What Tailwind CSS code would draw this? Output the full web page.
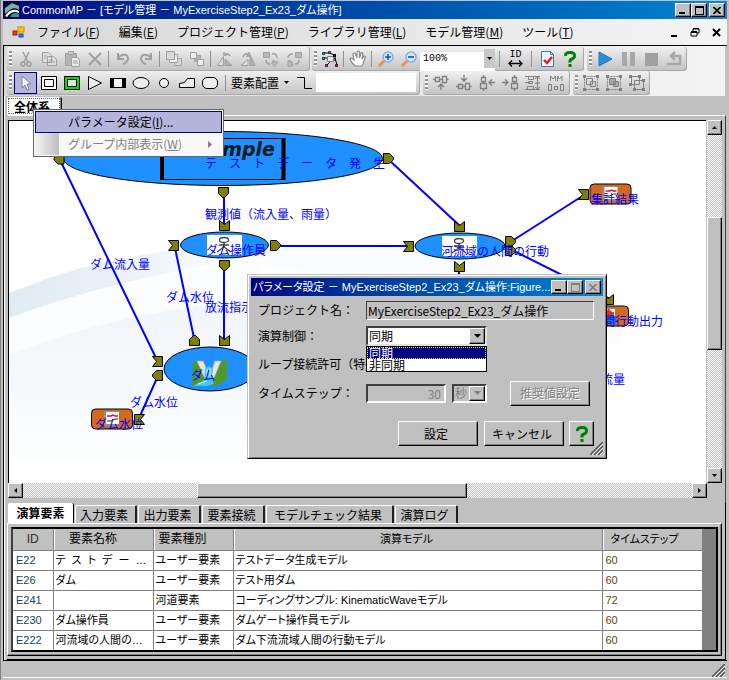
<!DOCTYPE html>
<html lang="ja">
	<head>
		<meta charset="UTF-8" />
		<meta name="viewport" content="width=device-width, initial-scale=1.0" />
		<title>CommonMP - モデル管理</title>
		<script src="https://cdn.jsdelivr.net/npm/@tailwindcss/browser@4"></script>
	</head>
	<body class="bg-[#c0c0c0] text-black text-[12px] leading-[14px] font-['Noto_Sans_CJK_JP',sans-serif]">
		<div class="relative min-h-screen flex flex-col pt-px px-[2px] pb-[2px] overflow-hidden border-l border-[#808080]">
			<!-- Title bar -->
			<header class="h-[18px] shrink-0 flex items-center gap-[2px] pl-px pr-[2px] bg-linear-to-r from-[#000080] to-[#1084d0] text-white">
				<svg class="size-4 shrink-0" viewBox="0 0 16 16">
					<rect width="16" height="16" fill="#0a0a14" />
					<path d="M1 6 L8 1 L15 4 L15 8 Q10 3 1 12Z" fill="#7fa9b8" />
					<path d="M1 14 Q7 5 15 9 L15 11 Q8 8 3 15Z" fill="#fff" />
					<path d="M6 15 Q9 9 15 12 L15 15Z" fill="#3b8fae" />
				</svg>
				<h1 class="grow truncate text-[11px] font-['Liberation_Sans','Noto_Sans_CJK_JP',sans-serif] [font-feature-settings:'palt']">CommonMP － [モデル管理 － MyExerciseStep2_Ex23_ダム操作]</h1>
				<div class="flex">
					<button aria-label="最小化" class="w-4 h-[14px] flex items-end pl-[3px] pb-[2px] bg-[#c0c0c0] border border-t-white border-l-white border-r-black border-b-black shadow-[inset_-1px_-1px_0_#808080]"><span class="w-[6px] h-[2px] bg-black"></span></button>
					<button aria-label="最大化" class="w-4 h-[14px] flex items-center justify-center bg-[#c0c0c0] border border-t-white border-l-white border-r-black border-b-black shadow-[inset_-1px_-1px_0_#808080]"><span class="w-[9px] h-[9px] border border-t-2 border-black"></span></button>
					<button aria-label="閉じる" class="ml-[2px] w-4 h-[14px] flex items-center justify-center bg-[#c0c0c0] border border-t-white border-l-white border-r-black border-b-black shadow-[inset_-1px_-1px_0_#808080]"><svg class="w-2 h-[7px]" viewBox="0 0 8 7"><path d="M.5 0 L7.5 7 M7.5 0 L.5 7" stroke="#000" stroke-width="1.6" /></svg></button>
				</div>
			</header>

			<!-- Menu bar -->
			<nav class="h-[26px] shrink-0 flex items-center pl-[9px] pr-[6px] bg-linear-to-r from-[#d8d8d8] to-[#f4f4f4]">
				<svg class="w-[13px] h-3 mr-3 shrink-0" viewBox="0 0 13 12">
					<rect x="1" y="5" width="4" height="4" fill="#f03c14" stroke="#a02000" />
					<rect x="6" y="1" width="6" height="5" fill="#ffc800" stroke="#c89000" />
					<rect x="7" y="8" width="4" height="3" fill="#3c78f0" stroke="#1c48a0" />
				</svg>
				<div class="flex gap-[19px] grow">
					<button>ファイル(<u>F</u>)</button>
					<button>編集(<u>E</u>)</button>
					<button>プロジェクト管理(<u>P</u>)</button>
					<button>ライブラリ管理(<u>L</u>)</button>
					<button>モデル管理(<u>M</u>)</button>
					<button>ツール(<u>T</u>)</button>
				</div>
				<div class="flex gap-[12px] items-center">
					<button aria-label="子ウィンドウを最小化"><svg class="w-[8px] h-[9px]" viewBox="0 0 8 9"><path d="M1 8h6" stroke="#000" stroke-width="2" /></svg></button>
					<button aria-label="子ウィンドウを元に戻す"><svg class="w-[10px] h-[9px]" viewBox="0 0 10 9" fill="none" stroke="#000"><path d="M3 3V1h6v4H7M3 .5h6M1 4h6v4H1z" /><path d="M1 4h6" stroke-width="2" /></svg></button>
					<button aria-label="子ウィンドウを閉じる"><svg class="w-[9px] h-[9px]" viewBox="0 0 9 9"><path d="M1 1l7 7M8 1L1 8" stroke="#000" stroke-width="2" /></svg></button>
				</div>
			</nav>

			<main class="grow flex flex-col border-l border-t border-black shadow-[inset_1px_0_0_#fff]">
				<!-- Tool bars -->
				<div class="shrink-0 pl-[3px] pt-px pb-px mr-[2px] bg-linear-to-r from-[#d8d8d8] to-[#f4f4f4]">
					<div class="flex h-6 gap-[2px]">
						<div class="flex items-center rounded-[3px] pr-1 bg-linear-to-b from-[#f0f0f0] to-[#c4c4c4] border-r border-b border-[#a8a8a8]">
							<span class="w-[3px] h-[15px] ml-[2px] mr-[2px] bg-[repeating-linear-gradient(#909090_0_2px,#f8f8f8_2px_4px)]"></span>
							<button aria-label="切り取り" class="w-[23px] flex justify-center"><svg class="size-[18px]" viewBox="0 0 18 18" fill="none" stroke="#a0a0a0" stroke-width="1.5"><path d="M6 2l5 10M12 2L7 12" /><circle cx="6" cy="14" r="2" /><circle cx="12" cy="14" r="2" /></svg></button>
							<button aria-label="コピー" class="w-[23px] flex justify-center"><svg class="size-[18px]" viewBox="0 0 18 18" fill="#e0e0e0" stroke="#a0a0a0"><path d="M2.500 2.500h6l3 3v7h-9zM7.500 6.500h6l3 3v6h-9z" /><path d="M4 6h3M9 10h4M9 12h6M4 8h2" /></svg></button>
							<button aria-label="貼り付け" class="w-[23px] flex justify-center"><svg class="size-[18px]" viewBox="0 0 18 18" stroke="#a0a0a0"><path d="M2.500 3.500h11v12h-11z" fill="#b4b4b4" /><path d="M5.500 1.500h5v3h-5z" fill="#d0d0d0" /><path d="M8.500 7.500h6l2 2v7h-8z" fill="#e8e8e8" /><path d="M10 11h5M10 13h5" /></svg></button>
							<button aria-label="削除" class="w-[23px] flex justify-center"><svg class="size-[18px]" viewBox="0 0 18 18"><path d="M3 3l12 12M15 3L3 15" stroke="#a0a0a0" stroke-width="2" /></svg></button>
							<span class="w-px h-4 mx-[2px] bg-[#909090]"></span>
							<button aria-label="元に戻す" class="w-[23px] flex justify-center"><svg class="size-[18px]" viewBox="0 0 18 18" fill="none" stroke="#a0a0a0" stroke-width="2"><path d="M4 3v6h6M4 8C8 3 15 4 14 9Q13 13 9 14" /></svg></button>
							<button aria-label="やり直し" class="w-[23px] flex justify-center"><svg class="size-[18px]" viewBox="0 0 18 18" fill="none" stroke="#a0a0a0" stroke-width="2"><path d="M14 3v6H8M14 8C10 3 4 4 4 9Q5 13 9 14" /></svg></button>
							<span class="w-px h-4 mx-[2px] bg-[#909090]"></span>
							<button aria-label="前面へ" class="w-[23px] flex justify-center"><svg class="size-[18px]" viewBox="0 0 18 18" fill="#d8d8d8" stroke="#a0a0a0"><path d="M9.500 8.500h7v7h-7z" /><path d="M4.500 4.500h8v8h-8z" fill="#ececec" /><path d="M1.500 1.500h8v8h-8z" /></svg></button>
							<button aria-label="背面へ" class="w-[23px] flex justify-center"><svg class="size-[18px]" viewBox="0 0 18 18" fill="#ececec" stroke="#a0a0a0"><path d="M6.500 5.500h6v6h-6z" fill="#b4b4b4" /><path d="M2.500 2.500h6v6h-6zM9.500 9.500h6v6h-6z" /></svg></button>
							<span class="w-px h-4 mx-[2px] bg-[#909090]"></span>
							<button aria-label="左回転" class="w-[23px] flex justify-center"><svg class="size-[18px]" viewBox="0 0 18 18" fill="none" stroke="#a0a0a0"><path d="M1.500 15.500l6-9v9z" fill="#ddd" /><path d="M9 15.500V9l7 6.500z" fill="#b0b0b0" /><path d="M8 5q3-3 6 1M8 2v3h3" stroke-width="1.500" /></svg></button>
							<button aria-label="右回転" class="w-[23px] flex justify-center"><svg class="size-[18px]" viewBox="0 0 18 18" fill="none" stroke="#a0a0a0"><path d="M2 15.500l7-6v6z" fill="#ddd" /><path d="M11 15.500v-11l5 11z" fill="#b0b0b0" /><path d="M4 7q2-5 6-2M10 2v4H7" stroke-width="1.500" /></svg></button>
							<button aria-label="左右反転" class="w-[23px] flex justify-center"><svg class="size-[18px]" viewBox="0 0 18 18" fill="#b8b8b8" stroke="#a0a0a0"><path d="M1.500 2.500h6v5h-6zM11 10.500l5 2-4 4-2-3z" /><path d="M10 4q5-1 5 4M4 10q0 4 4 4" fill="none" stroke-width="1.500" /></svg></button>
							<button aria-label="上下反転" class="w-[23px] flex justify-center"><svg class="size-[18px]" viewBox="0 0 18 18" fill="#b8b8b8" stroke="#a0a0a0"><path d="M10.500 2.500h6v5h-6zM3 10.500l4 1 1 4-5 1z" /><path d="M8 4q-5 0-5 4M14 10q0 4-4 4" fill="none" stroke-width="1.500" /></svg></button>
						</div>
						<div class="flex items-center rounded-[3px] pr-[2px] bg-linear-to-b from-[#f0f0f0] to-[#c4c4c4] border-r border-b border-[#a8a8a8]">
							<span class="w-[3px] h-[15px] ml-[2px] mr-px bg-[repeating-linear-gradient(#909090_0_2px,#f8f8f8_2px_4px)]"></span>
							<button aria-label="自動配置" class="w-[23px] flex justify-center"><svg class="size-[18px]" viewBox="0 0 18 18"><path d="M3 3h5l6 2v6M3 8h4M14 8l2 7M6 15l4-4" stroke="#000" fill="none" /><path d="M6.500 6.500h6v5h-6z" fill="#e8e8e8" stroke="#808080" /><path d="M1.500 2.500h2v2h-2zM7.500 1.500h2v2h-2zM1.500 7.500h2v2h-2z" fill="#00c0c0" stroke="#000" stroke-width=".7" /><path d="M4.500 14.500h2v2h-2zM14.500 14.500h2v2h-2z" fill="#e000e0" stroke="#000" stroke-width=".7" /><path d="M12 4h3v3h-3z" /></svg></button>
							<span class="w-px h-4 mx-[2px] bg-[#909090]"></span>
							<button aria-label="移動" class="w-[23px] flex justify-center"><svg class="size-[18px]" viewBox="0 0 18 18"><path d="M6 16Q2 12 1 9q1-2 4 1L4 4q1-2 2.500 0L8 8V2q1.500-2 2.500 0V8l1.500-5q1.500-1 2 1l-1 5 2-3q1.500 0 1 2l-2 6-1 2z" fill="#fff" stroke="#888" stroke-width="1.200" /></svg></button>
							<span class="w-px h-4 mx-[2px] bg-[#909090]"></span>
							<button aria-label="拡大" class="w-[23px] flex justify-center"><svg class="size-[18px]" viewBox="0 0 18 18"><path d="M2 16l5-5" stroke="#e8924a" stroke-width="3" /><circle cx="11" cy="7" r="5" fill="#d4e8ff" stroke="#80b0e8" stroke-width="1.500" /><path d="M8 7h6M11 4v6" stroke="#1850c0" stroke-width="1.600" /></svg></button>
							<button aria-label="縮小" class="w-[23px] flex justify-center"><svg class="size-[18px]" viewBox="0 0 18 18"><path d="M2 16l5-5" stroke="#e8924a" stroke-width="3" /><circle cx="11" cy="7" r="5" fill="#d4e8ff" stroke="#80b0e8" stroke-width="1.500" /><path d="M8 7h6" stroke="#1850c0" stroke-width="1.600" /></svg></button>
							<div class="relative w-[75px] h-[19px]">
								<select aria-label="倍率" class="appearance-none size-full bg-white pl-[3px] pb-1 font-['Liberation_Mono',monospace] text-[10px]"><option>100%</option></select>
								<span class="absolute right-0 inset-y-0 w-[11px] bg-[#c8c8c8] flex items-center justify-center pointer-events-none"><svg class="w-[5px] h-[3px]" viewBox="0 0 5 3"><path d="M0 0h5L2.500 3z" /></svg></span>
							</div>
							<span class="w-px h-4 mx-[4px] bg-[#909090]"></span>
							<button aria-label="ID表示" class="w-[23px] h-[18px] flex flex-col items-center font-['Liberation_Mono',monospace] text-[10px] leading-[10px]">ID<svg class="w-[15px] h-[7px]" viewBox="0 0 15 7"><path d="M1 3.500h13M4 .5l-3 3 3 3M11 .5l3 3-3 3" stroke="#000" fill="none" stroke-width="1.300" /></svg></button>
							<span class="w-px h-4 mx-[4px] bg-[#909090]"></span>
							<button aria-label="チェック" class="w-[22px] flex justify-center"><svg class="size-[18px]" viewBox="0 0 18 18"><path d="M3.500 1.500h9l3 3v12h-12z" fill="#eaf2ff" stroke="#4878b8" /><path d="M12.500 1.500v3h3" fill="none" stroke="#4878b8" /><path d="M6 10l3 3 5-6" stroke="#e02010" stroke-width="2.400" fill="none" /></svg></button>
							<button aria-label="ヘルプ" class="w-[23px] flex justify-center"><svg class="size-[18px]" viewBox="0 0 18 18"><path d="M4.500 6Q4 2.500 9 2.500T13.500 6Q13.500 8 11 9T9 12.500M9 14v3" fill="none" stroke="#008000" stroke-width="3" /></svg></button>
						</div>
						<div class="flex items-center ml-px rounded-[3px] pr-px bg-linear-to-b from-[#f0f0f0] to-[#c4c4c4] border-r border-b border-[#a8a8a8]">
							<span class="w-[3px] h-[15px] ml-[2px] mr-px bg-[repeating-linear-gradient(#909090_0_2px,#f8f8f8_2px_4px)]"></span>
							<button aria-label="実行" class="w-[23px] flex justify-center"><svg class="size-[18px]" viewBox="0 0 18 18"><path d="M3 2l13 7-13 7z" fill="#2e8fd0" stroke="#1c78b8" /></svg></button>
							<button aria-label="一時停止" class="w-[23px] flex justify-center"><svg class="size-[18px]" viewBox="0 0 18 18"><path d="M3 2h5v14H3zM11 2h5v14h-5z" fill="#a8a8a8" /></svg></button>
							<button aria-label="停止" class="w-[23px] flex justify-center"><svg class="size-[18px]" viewBox="0 0 18 18"><path d="M3 3h13v13H3z" fill="#a0a0a0" /></svg></button>
							<button aria-label="戻る" class="w-[23px] flex justify-center"><svg class="size-[18px]" viewBox="0 0 18 18"><path d="M2 14h13V6H7M10 2L6 6l4 4" fill="none" stroke="#a8a8a8" stroke-width="2.500" /></svg></button>
						</div>
					</div>
					<div class="flex h-6 gap-[2px]">
						<div class="flex items-center rounded-[3px] pr-[3px] bg-linear-to-b from-[#f0f0f0] to-[#c4c4c4] border-r border-b border-[#a8a8a8]">
							<span class="w-[3px] h-[15px] ml-[2px] mr-[2px] bg-[repeating-linear-gradient(#909090_0_2px,#f8f8f8_2px_4px)]"></span>
							<button aria-label="選択" class="w-[23px] h-[22px] flex items-center justify-center bg-[#b5b5dc] border border-[#000080]"><svg class="size-[18px]" viewBox="0 0 18 18"><path d="M5 2v12l3-3 2 5 2-1-2-5h4z" fill="#fff" stroke="#7080a0" /></svg></button>
							<button aria-label="要素" class="w-[23px] flex justify-center"><svg class="size-[18px]" viewBox="0 0 18 18" fill="#fff" stroke="#000"><path d="M1.500 2.500h15v13h-15zM4.500 5.500h9v7h-9z" /></svg></button>
							<button aria-label="グループ要素" class="w-[23px] flex justify-center"><svg class="size-[18px]" viewBox="0 0 18 18" stroke="#000"><path d="M1.500 2.500h15v13h-15z" fill="#00e000" /><path d="M4.500 5.500h9v7h-9z" fill="#e0e0e0" /></svg></button>
							<button aria-label="三角形" class="w-[23px] flex justify-center"><svg class="size-[18px]" viewBox="0 0 18 18"><path d="M2.500 2.500v13l13-6.500z" fill="#eee" stroke="#000" /></svg></button>
							<button aria-label="四角形" class="w-[23px] flex justify-center"><svg class="size-[18px]" viewBox="0 0 18 18"><path d="M1.500 4.500h15v9h-15z" fill="#f4f4f4" stroke="#000" /><path d="M1 4h4v10H1zM13 4h4v10h-4z" /></svg></button>
							<button aria-label="楕円" class="w-[23px] flex justify-center"><svg class="size-[18px]" viewBox="0 0 18 18"><ellipse cx="9" cy="9" rx="8" ry="5.500" fill="#eee" stroke="#000" /></svg></button>
							<button aria-label="円" class="w-[23px] flex justify-center"><svg class="size-[18px]" viewBox="0 0 18 18"><circle cx="9" cy="9" r="4.500" fill="#eee" stroke="#000" /></svg></button>
							<button aria-label="台形" class="w-[23px] flex justify-center"><svg class="size-[18px]" viewBox="0 0 18 18"><path d="M1.500 13.500v-4l5-1 3-4h7v9z" fill="#eee" stroke="#000" /></svg></button>
							<button aria-label="角丸四角形" class="w-[23px] flex justify-center"><svg class="size-[18px]" viewBox="0 0 18 18"><rect x="1.500" y="3.500" width="15" height="11" rx="4.500" fill="#eee" stroke="#000" /></svg></button>
							<span class="w-px h-4 mx-[4px] bg-[#909090]"></span>
							<button class="flex items-center gap-1 px-px">要素配置<svg class="w-[5px] h-[3px] mx-px" viewBox="0 0 5 3"><path d="M0 0h5L2.500 3z" /></svg></button>
							<button aria-label="接続線" class="w-[25px] flex justify-center"><svg class="size-[18px]" viewBox="0 0 18 18"><path d="M2 3.500h7.500v11H17" fill="none" stroke="#000" /></svg></button>
							<input type="text" aria-label="名称" class="w-[100px] h-[19px] bg-white px-1" />
						</div>
						<div class="flex items-center ml-px rounded-[3px] pr-[2px] bg-linear-to-b from-[#f0f0f0] to-[#c4c4c4] border-r border-b border-[#a8a8a8]">
							<span class="w-[3px] h-[15px] ml-[2px] mr-px bg-[repeating-linear-gradient(#909090_0_2px,#f8f8f8_2px_4px)]"></span>
							<button aria-label="上揃え" class="w-[23px] flex justify-center"><svg class="size-[18px]" viewBox="0 0 18 18" fill="none" stroke="#808080"><path d="M1 5.500h2M3.500 3.500h4v4h-4zM7.500 5.500h3M10.500 2.500h4v6h-4zM14.500 5.500h2M9 16V10M6 13l3-3 3 3" stroke-width="1.300" /></svg></button>
							<button aria-label="下揃え" class="w-[23px] flex justify-center"><svg class="size-[18px]" viewBox="0 0 18 18" fill="none" stroke="#808080"><path d="M1 12.500h2M3.500 10.500h4v4h-4zM7.500 12.500h3M10.500 9.500h4v6h-4zM14.500 12.500h2M9 1v6M6 4l3 3 3-3" stroke-width="1.300" /></svg></button>
							<button aria-label="左揃え" class="w-[23px] flex justify-center"><svg class="size-[18px]" viewBox="0 0 18 18" fill="none" stroke="#808080"><path d="M5.500 1v2M3.500 3.500h4v4h-4zM5.500 7.500v2M2.500 9.500h6v5h-6zM5.500 15v2M17 8.500h-6M14 5.500l-3 3 3 3" stroke-width="1.300" /></svg></button>
							<button aria-label="右揃え" class="w-[23px] flex justify-center"><svg class="size-[18px]" viewBox="0 0 18 18" fill="none" stroke="#808080"><path d="M13.500 1v2M11.500 3.500h4v4h-4zM13.500 7.500v2M10.500 9.500h6v5h-6zM13.500 15v2M1 8.500h6M4 5.500l3 3-3 3" stroke-width="1.300" /></svg></button>
							<button aria-label="縦均等" class="w-[23px] flex justify-center"><svg class="size-[18px]" viewBox="0 0 18 18" fill="none" stroke="#808080"><path d="M1 2.500h15M4.500 2.500v3h5v-3M1 8.500h5M4.500 7.500h4v2h-4zM1 15.500h15M3.500 15.500v-3h6v3M13.500 3v12M11 5l2.500-2L16 5M11 9h5M11 13l2.500 2 2.500-2" /></svg></button>
							<button aria-label="横均等" class="w-[23px] flex justify-center"><svg class="size-[18px]" viewBox="0 0 18 18" fill="none" stroke="#808080"><path d="M3.500 7V2l2.500 3 2.500-3v5M10.500 7V2l2 3 2.500-3v5M1.500 10.500h3v6h-3zM7.500 12.500h3v3h-3zM13.500 10.500h3v6h-3z" /></svg></button>
						</div>
						<div class="flex items-center ml-px rounded-[3px] pr-px bg-linear-to-b from-[#f0f0f0] to-[#c4c4c4] border-r border-b border-[#a8a8a8]">
							<span class="w-[3px] h-[15px] ml-[2px] mr-px bg-[repeating-linear-gradient(#909090_0_2px,#f8f8f8_2px_4px)]"></span>
							<button aria-label="グループ化" class="w-[23px] flex justify-center"><svg class="size-[18px]" viewBox="0 0 18 18" fill="none" stroke="#808080"><path d="M2.500 2.500h13v13h-13z" stroke-dasharray="2 1" /><path d="M4.500 4.500h6v6h-6zM8.500 7.500h5v5h-5z" /><path d="M1 1h3v3H1zM14 1h3v3h-3zM1 14h3v3H1zM14 14h3v3h-3z" fill="#808080" stroke="none" /></svg></button>
							<button aria-label="グループ編集" class="w-[23px] flex justify-center"><svg class="size-[18px]" viewBox="0 0 18 18" fill="none" stroke="#808080"><path d="M2.500 2.500h13v13h-13z" stroke-dasharray="2 1" /><path d="M4.500 4.500h6v6h-6zM8.500 7.500h5v5h-5z" fill="#a8a8a8" /><path d="M1 1h3v3H1zM14 1h3v3h-3zM1 14h3v3H1zM14 14h3v3h-3z" fill="#808080" stroke="none" /></svg></button>
							<button aria-label="グループ解除" class="w-[23px] flex justify-center"><svg class="size-[18px]" viewBox="0 0 18 18" fill="none" stroke="#808080"><path d="M3.500 2.500h8v8h-8zM6.500 6.500h9v9h-9z" /><path d="M1 1h3v3H1zM10 1h3v3h-3zM1 9h3v3H1zM14 5h3v3h-3zM5 14h3v3H5zM14 14h3v3h-3z" fill="#808080" stroke="none" /></svg></button>
						</div>
					</div>
				</div>

				<!-- Model sheet tab -->
				<div class="shrink-0 h-[19px] flex items-end pl-[3px]">
					<button class="w-[55px] h-[18px] p-px bg-white rounded-t-[2px] border-r border-black shadow-[inset_-1px_0_0_#808080] font-bold"><span class="block h-[16px] leading-[16px] pr-1 border border-dotted border-[#606060]">全体系</span></button>
				</div>

				<!-- Canvas with scroll bars -->
				<div class="grow flex flex-col border-t border-white ml-[4px] mr-px pt-[4px] pb-[5px] pr-[3px] border-r border-r-[#404040]">
					<div class="grow flex min-h-[360px]">
						<div class="relative grow bg-white border-l border-t border-black overflow-hidden">
							<svg class="absolute inset-0 size-full font-['Noto_Sans_CJK_JP',sans-serif]" font-size="12">
								<defs>
									<linearGradient id="band" x1="0" x2="1">
										<stop offset="0" stop-color="#dfebf3" />
										<stop offset=".5" stop-color="#edf3f9" />
										<stop offset="1" stop-color="#fff" />
									</linearGradient>
									<linearGradient id="haze" x1="0" y1="0" x2="0" y2="1">
										<stop offset="0" stop-color="#f0f5f9" />
										<stop offset="1" stop-color="#fdfeff" />
									</linearGradient>
									<!-- Connector shapes, 10px square -->
									<path id="down" d="M-5-5H5V1L1 5H-1L-5 1Z" />
									<path id="up" d="M-5 5H5V-1L1-5H-1L-5-1Z" />
									<path id="right" d="M-5-5H1L5-1V1L1 5H-5Z" />
									<path id="left" d="M5-5H-1L-5-1V1L-1 5H5Z" />
									<path id="slot-top" d="M-5-5L0-1L5-5V5H-5Z" />
									<path id="slot-left" d="M-5-5H5V5H-5L-1 0Z" />
									<path id="slot-right" d="M5-5H-5V5H5L1 0Z" />
									<g id="person">
										<rect x="-17" y="-10" width="35" height="20" fill="#fff" />
										<ellipse cx="0" cy="-5" rx="4.500" ry="2.500" fill="none" stroke="#444" stroke-width="1.300" />
										<path d="M0-2V3M-5 0H5M0 2L-7 7M0 2L7 7" fill="none" stroke="#444" stroke-width="1.500" />
									</g>
									<g id="chart">
										<rect x="-20.500" y="-10" width="41" height="20" rx="4" fill="#d2691e" stroke="#000" />
										<rect x="-8" y="-8" width="14" height="15" fill="#909090" />
										<rect x="-6" y="-7" width="13" height="12" fill="#fff" />
										<path d="M-5-3h4l2-1 2 1h3" fill="none" stroke="#e01030" stroke-width="1.500" />
										<path d="M-5 2h4l4-2h3" fill="none" stroke="#202020" />
									</g>
								</defs>
								<g transform="translate(-9 -121)">
									<path d="M20 289Q90 260 175 250Q200 247 260 246V256Q110 280 9 318V293Z" fill="url(#band)" />
									<path d="M230 245Q340 232 440 250Q530 262 620 310V346Q450 285 230 262Z" fill="#fafcfd" />
									<path d="M9 318Q110 280 260 260V304Q120 310 9 355Z" fill="#fcfdfe" />
									<path d="M9 355Q120 310 260 300V461H9Z" fill="url(#haze)" />

									<g stroke="#0000ff" stroke-width="2" fill="none">
										<path d="M61 162L157 360M224 195V226M389 160L460 226M175 248L194 338M224 268V341M278 246H409M512 241L584 195M512 250L612 300M459 268V300M157 378L140 416" />
									</g>

									<g fill="#1e90ff" stroke="#000">
										<ellipse cx="223" cy="158.500" rx="159.500" ry="27" />
										<ellipse cx="224.500" cy="245" rx="44" ry="13" />
										<ellipse cx="460" cy="246" rx="45" ry="13" />
										<ellipse cx="210" cy="369" rx="46" ry="22" />
									</g>
									<rect x="161.500" y="138.500" width="123" height="41" fill="none" stroke="#000" />
									<path d="M162 138V180M283.500 138V180" stroke="#000" stroke-width="4" />
									<text x="275" y="156" text-anchor="end" font-family="DejaVu Sans" font-size="19" font-style="italic" font-weight="bold" fill="#101820">Sample</text>
									<use href="#person" x="224" y="245" />
									<use href="#person" x="459" y="246" />
									<use href="#chart" x="112" y="419" />
									<use href="#chart" x="610.500" y="194" />
									<use href="#chart" x="608" y="316" />
									<path d="M608 308l6 6-4 8h-6z" fill="#e03020" />
									<path d="M608 316h8v8h-8z" fill="#2878c8" />

									<!-- Dam picture -->
									<path d="M193 362L201 361L206 376L199 386H192ZM222 361L227 358V380L216 386H210Z" fill="#4c9a2c" />
									<path d="M197 361H203L210 377H204ZM215 361H221L214 378H209Z" fill="#ebe6da" stroke="#b8a890" stroke-width=".5" />
									<path d="M205 368L209 366L213 369L212 378L214 384L206 386H193L204 380Z" fill="#48c8f0" />
									<path d="M207 369v8M210 368v9M198 384l9-3" stroke="#e8fcff" />

									<g fill="#808000" stroke="#000">
										<use href="#left" x="59" y="159" />
										<use href="#right" x="388.500" y="158.500" />
										<use href="#down" x="223.500" y="192.500" />
										<use href="#slot-top" x="224.500" y="225.500" />
										<use href="#slot-left" x="173.500" y="245.500" />
										<use href="#right" x="275.500" y="245.500" />
										<use href="#down" x="224.500" y="265.500" />
										<use href="#slot-left" x="408.500" y="246.500" />
										<use href="#slot-top" x="459.500" y="226.500" />
										<use href="#slot-top" x="459.500" y="266.500" />
										<use href="#slot-left" x="583.500" y="194.500" />
										<use href="#right" x="510.500" y="250.500" />
										<use href="#right" x="510.500" y="241.500" />
										<use href="#up" x="194.500" y="340.500" />
										<use href="#slot-top" x="224.500" y="340.500" />
										<use href="#slot-left" x="157.500" y="361.500" />
										<use href="#left" x="157.500" y="375.500" />
										<use href="#slot-right" x="139.500" y="419.500" />
										<use href="#slot-top" x="608.500" y="299.500" />
									</g>

									<g fill="#0000ff">
										<text x="205" y="168">テ　ス　ト　デ　ー　タ　発　生</text>
										<text x="205" y="219">観測値（流入量、雨量）</text>
										<text x="206" y="255">ダム操作員</text>
										<text x="441" y="256">河流域の人間の行動</text>
										<text x="591" y="204">集計結果</text>
										<text x="90" y="269">ダム流入量</text>
										<text x="166" y="302">ダム水位</text>
										<text x="205" y="312">放流指示</text>
										<text x="191" y="380">ダム</text>
										<text x="130" y="407">ダム水位</text>
										<text x="95" y="429">ダム水位</text>
										<text x="663" y="326" text-anchor="end">人間行動出力</text>
										<text x="625" y="384" text-anchor="end">放流量</text>
									</g>
								</g>
							</svg>
						</div>
						<div class="ml-px w-[15px] flex flex-col bg-[conic-gradient(#fff_25%,#c0c0c0_0_50%,#fff_0_75%,#c0c0c0_0)] bg-size-[2px_2px]">
							<button aria-label="上へ" class="h-[15px] flex items-center justify-center bg-[#c0c0c0] border border-t-white border-l-white border-r-black border-b-black shadow-[inset_-1px_-1px_0_#808080]"><svg class="w-[5px] h-[3px]" viewBox="0 0 5 3"><path d="M0 3h5L2.500 0z" /></svg></button>
							<div class="grow-[83]"></div>
							<div class="grow-[132] bg-[#c0c0c0] border border-t-white border-l-white border-r-black border-b-black shadow-[inset_-1px_-1px_0_#808080]"></div>
							<div class="grow-[119]"></div>
							<button aria-label="下へ" class="h-[15px] flex items-center justify-center bg-[#c0c0c0] border border-t-white border-l-white border-r-black border-b-black shadow-[inset_-1px_-1px_0_#808080]"><svg class="w-[5px] h-[3px]" viewBox="0 0 5 3"><path d="M0 0h5L2.500 3z" /></svg></button>
						</div>
					</div>
					<div class="h-[15px] flex mr-[15px] bg-[conic-gradient(#fff_25%,#c0c0c0_0_50%,#fff_0_75%,#c0c0c0_0)] bg-size-[2px_2px]">
						<button aria-label="左へ" class="w-[15px] flex items-center justify-center bg-[#c0c0c0] border border-t-white border-l-white border-r-black border-b-black shadow-[inset_-1px_-1px_0_#808080]"><svg class="w-[3px] h-[5px]" viewBox="0 0 3 5"><path d="M3 0v5L0 2.500z" /></svg></button>
						<div class="grow-[175]"></div>
						<div class="grow-[268] bg-[#c0c0c0] border border-t-white border-l-white border-r-black border-b-black shadow-[inset_-1px_-1px_0_#808080]"></div>
						<div class="grow-[226]"></div>
						<button aria-label="右へ" class="w-[15px] flex items-center justify-center bg-[#c0c0c0] border border-t-white border-l-white border-r-black border-b-black shadow-[inset_-1px_-1px_0_#808080]"><svg class="w-[3px] h-[5px]" viewBox="0 0 3 5"><path d="M0 0v5l3-2.500z" /></svg></button>
					</div>
				</div>

				<!-- Element list -->
				<section class="shrink-0 ml-[3px] mr-px pb-[3px] border-r border-b border-[#000]">
					<div class="flex items-end h-[20px] gap-px pl-px">
						<button class="w-[66px] h-[20px] bg-white rounded-t-[2px] border-r border-black font-bold">演算要素</button>
						<button class="w-[62px] h-[18px] pr-[3px] rounded-t-[2px] border-t border-l border-t-white border-l-white border-r-2 border-r-[#202020]">入力要素</button>
						<button class="w-[63px] h-[18px] pr-[3px] rounded-t-[2px] border-t border-l border-t-white border-l-white border-r-2 border-r-[#202020]">出力要素</button>
						<button class="w-[63px] h-[18px] pr-[3px] rounded-t-[2px] border-t border-l border-t-white border-l-white border-r-2 border-r-[#202020]">要素接続</button>
						<button class="w-[128px] h-[18px] pr-[3px] rounded-t-[2px] border-t border-l border-t-white border-l-white border-r-2 border-r-[#202020]">モデルチェック結果</button>
						<button class="w-[63px] h-[18px] pr-[3px] rounded-t-[2px] border-t border-l border-t-white border-l-white border-r-2 border-r-[#202020]">演算ログ</button>
					</div>
					<div class="mr-[3px] p-[3px] border border-t-white border-l-white border-r-black border-b-black shadow-[inset_-1px_-1px_0_#808080]">
						<div class="border-2 border-t-black border-l-[#404040] border-r-black border-b-black bg-[#808080] pr-[14px]">
							<table class="w-full table-fixed border-collapse bg-white font-['Liberation_Sans','Noto_Sans_CJK_JP',sans-serif] [font-feature-settings:'palt']">
								<colgroup>
									<col class="w-[40px]" />
									<col class="w-[100px]" />
									<col class="w-[80px]" />
									<col />
									<col class="w-[100px]" />
								</colgroup>
								<thead>
									<tr class="h-[21px] bg-[#c0c0c0] border-b border-[#808080]">
										<th class="font-normal text-[#303030] border-r border-[#808080] p-0">ID</th>
										<th class="font-normal border-r border-[#808080] shadow-[inset_1px_0_0_#fff] py-0 pl-0 pr-[20px]">要素名称</th>
										<th class="font-normal text-left border-r border-[#808080] shadow-[inset_1px_0_0_#fff] py-0 pl-[5px]">要素種別</th>
										<th class="font-normal text-[11px] border-r border-[#808080] shadow-[inset_1px_0_0_#fff] py-0 pr-[22px]">演算モデル</th>
										<th class="font-normal text-[11px] text-left shadow-[inset_1px_0_0_#fff] py-0 pl-[8px]">タイムステップ</th>
									</tr>
								</thead>
								<tbody class="text-[11px] whitespace-nowrap">
									<tr class="h-[20px] border-b border-[#808080]">
										<td class="py-0 px-[3px] text-[#204060] border-r border-[#808080]">E22</td>
										<td class="py-0 px-[2px] truncate border-r border-[#808080]">テ&nbsp; ス&nbsp; ト&nbsp; デ&nbsp; ー&nbsp; タ&nbsp; 発&nbsp; 生</td>
										<td class="py-0 px-[2px] border-r border-[#808080]">ユーザー要素</td>
										<td class="py-0 px-[2px] border-r border-[#808080]">テストデータ生成モデル</td>
										<td class="py-0 px-[3px] text-[#604820]">60</td>
									</tr>
									<tr class="h-[20px] border-b border-[#808080]">
										<td class="py-0 px-[3px] text-[#204060] border-r border-[#808080]">E26</td>
										<td class="py-0 px-[2px] truncate border-r border-[#808080]">ダム</td>
										<td class="py-0 px-[2px] border-r border-[#808080]">ユーザー要素</td>
										<td class="py-0 px-[2px] border-r border-[#808080]">テスト用ダム</td>
										<td class="py-0 px-[3px] text-[#604820]">60</td>
									</tr>
									<tr class="h-[20px] border-b border-[#808080]">
										<td class="py-0 px-[3px] text-[#204060] border-r border-[#808080]">E241</td>
										<td class="py-0 px-[2px] truncate border-r border-[#808080]"></td>
										<td class="py-0 px-[2px] border-r border-[#808080]">河道要素</td>
										<td class="py-0 px-[2px] border-r border-[#808080]">コーディングサンプル: KinematicWaveモデル</td>
										<td class="py-0 px-[3px] text-[#604820]">72</td>
									</tr>
									<tr class="h-[20px] border-b border-[#808080]">
										<td class="py-0 px-[3px] text-[#204060] border-r border-[#808080]">E230</td>
										<td class="py-0 px-[2px] truncate border-r border-[#808080]">ダム操作員</td>
										<td class="py-0 px-[2px] border-r border-[#808080]">ユーザー要素</td>
										<td class="py-0 px-[2px] border-r border-[#808080]">ダムゲート操作員モデル</td>
										<td class="py-0 px-[3px] text-[#604820]">60</td>
									</tr>
									<tr class="h-[20px]">
										<td class="py-0 px-[3px] text-[#204060] border-r border-[#808080]">E222</td>
										<td class="py-0 px-[2px] truncate border-r border-[#808080]">河流域の人間の行動モデル</td>
										<td class="py-0 px-[2px] border-r border-[#808080]">ユーザー要素</td>
										<td class="py-0 px-[2px] border-r border-[#808080]">ダム下流流域人間の行動モデル</td>
										<td class="py-0 px-[3px] text-[#604820]">60</td>
									</tr>
								</tbody>
							</table>
						</div>
					</div>
				</section>
			</main>

			<!-- Status bar -->
			<footer class="h-[18px] shrink-0 flex justify-end items-end border-t border-black border-b border-b-white">
				<svg class="size-[13px] mr-[2px]" viewBox="0 0 13 13"><path d="M0 13L13 0M4 13l9-9M8 13l5-5" stroke="#505050" stroke-width="1.500" /><path d="M2 13L13 2M6 13l7-7M10 13l3-3" stroke="#fff" /></svg>
			</footer>

			<!-- Context menu of the sheet tab -->
			<div role="menu" class="absolute left-[32px] top-[109px] w-[191px] h-[48px] p-px bg-[#f8f8f8] border border-[#666]">
				<div class="h-full bg-linear-to-r from-[#f4f4f4] from-0% to-[#c0c0c0] to-[24px] bg-size-[24px_100%] bg-no-repeat">
					<button role="menuitem" class="block w-full h-[22px] pl-[32px] text-left bg-[#b5b5dc] border border-[#000080]">パラメータ設定(<u>I</u>)...</button>
					<button role="menuitem" disabled class="flex items-center justify-between w-full h-[22px] pl-[33px] pr-[10px] text-[#808080]"><span>グループ内部表示(<u>W</u>)</span><svg class="w-[4px] h-[7px]" viewBox="0 0 4 7"><path d="M0 0v7l4-3.500z" fill="#808080" /></svg></button>
				</div>
			</div>

			<!-- Parameter dialog -->
			<div role="dialog" aria-labelledby="dlg-title" class="absolute left-[246px] top-[274px] w-[360px] h-[185px] p-[2px] bg-[#c0c0c0] border border-t-[#c0c0c0] border-l-[#c0c0c0] border-r-black border-b-black shadow-[inset_1px_1px_0_#fff,inset_-1px_-1px_0_#808080]">
				<div class="m-px h-[18px] flex items-center pl-[2px] pr-[2px] bg-linear-to-r from-[#000080] to-[#1084d0] text-white">
					<h2 id="dlg-title" class="grow truncate text-[11px] font-['Liberation_Sans','Noto_Sans_CJK_JP',sans-serif] [font-feature-settings:'palt']">パラメータ設定 － MyExerciseStep2_Ex23_ダム操作:Figure...</h2>
					<button aria-label="最小化" class="w-4 h-[14px] shrink-0 flex items-end pl-[3px] pb-[2px] bg-[#c0c0c0] border border-t-white border-l-white border-r-black border-b-black shadow-[inset_-1px_-1px_0_#808080]"><span class="w-[6px] h-[2px] bg-black"></span></button>
					<button aria-label="最大化" disabled class="w-4 h-[14px] shrink-0 flex items-center justify-center bg-[#c0c0c0] border border-t-white border-l-white border-r-black border-b-black shadow-[inset_-1px_-1px_0_#808080]"><span class="w-[9px] h-[9px] border border-t-2 border-[#808080]"></span></button>
					<button aria-label="閉じる" class="ml-[2px] w-4 h-[14px] shrink-0 flex items-center justify-center bg-[#c0c0c0] border border-t-white border-l-white border-r-black border-b-black shadow-[inset_-1px_-1px_0_#808080]"><svg class="w-2 h-[7px]" viewBox="0 0 8 7"><path d="M.5 0 L7.5 7 M7.5 0 L.5 7" stroke="#808080" stroke-width="1.600" /></svg></button>
				</div>
				<form class="grid grid-cols-[108px_1fr] pl-[8px] pr-[10px] items-center">
					<label for="project" class="h-[26px] leading-[26px]">プロジェクト名：</label>
					<input id="project" readonly value="MyExerciseStep2_Ex23_ダム操作" class="h-[19px] w-full px-px bg-[#c0c0c0] border border-t-[#404040] border-l-[#404040] border-r-white border-b-white" />
					<label for="control" class="h-[26px] leading-[26px]">演算制御：</label>
					<div class="relative w-[121px] h-[20px]">
						<select id="control" class="appearance-none size-full pl-px bg-white border-2 border-t-[#404040] border-l-[#404040] border-r-[#e0e0e0] border-b-[#e0e0e0]"><option>同期</option><option>非同期</option></select>
						<span class="absolute right-[2px] top-[2px] size-4 pointer-events-none flex items-center justify-center bg-[#c0c0c0] border border-t-white border-l-white border-r-black border-b-black shadow-[inset_-1px_-1px_0_#808080]"><svg class="w-[7px] h-1" viewBox="0 0 7 4"><path d="M0 0h7L3.500 4z" /></svg></span>
						<ul class="absolute left-0 top-[20px] w-[121px] bg-white border border-black z-10">
							<li class="h-[12px] leading-[12px] pl-px bg-[#000080] text-white border border-dotted border-[#e0e060] flex items-center">同期</li>
							<li class="h-[12px] leading-[12px] pl-[2px]">非同期</li>
						</ul>
					</div>
					<span class="h-[30px] leading-[30px] whitespace-nowrap overflow-hidden">ループ接続許可（特殊）</span>
					<span></span>
					<label for="step" class="h-[28px] leading-[28px]">タイムステップ：</label>
					<div class="flex items-center">
						<input id="step" disabled value="30" class="w-[80px] h-[19px] pr-[3px] text-right text-[#808080] bg-[#c0c0c0] border-2 border-t-[#404040] border-l-[#404040] border-r-white border-b-white" />
						<div class="relative ml-[6px] w-[35px] h-[19px]">
							<select aria-label="単位" disabled class="appearance-none size-full pl-px text-[#808080] opacity-100 bg-[#c0c0c0] border-2 border-t-[#404040] border-l-[#404040] border-r-white border-b-white"><option>秒</option></select>
							<span class="absolute right-[2px] top-[2px] w-4 h-[15px] pointer-events-none flex items-center justify-center bg-[#c0c0c0] border border-t-white border-l-white border-r-black border-b-black shadow-[inset_-1px_-1px_0_#808080]"><svg class="w-[7px] h-1" viewBox="0 0 7 4"><path d="M0 0h7L3.500 4z" fill="#808080" /></svg></span>
						</div>
						<button type="button" disabled class="ml-[23px] w-[80px] h-[25px] text-[#808080] [text-shadow:1px_1px_0_#fff] border border-t-white border-l-white border-r-black border-b-black shadow-[inset_-1px_-1px_0_#808080]">推奨値設定</button>
					</div>
					<div class="col-span-2 flex justify-end pt-[14px]">
						<button type="button" class="w-[80px] h-[25px] pr-1 border border-t-white border-l-white border-r-black border-b-black shadow-[inset_-1px_-1px_0_#808080]">設定</button>
						<button type="button" class="ml-[6px] w-[80px] h-[25px] pr-1 border border-t-white border-l-white border-r-black border-b-black shadow-[inset_-1px_-1px_0_#808080]">キャンセル</button>
						<button type="button" aria-label="ヘルプ" class="ml-[5px] w-[25px] h-[25px] flex items-center justify-center border border-t-white border-l-white border-r-black border-b-black shadow-[inset_-1px_-1px_0_#808080]"><svg class="size-[18px]" viewBox="0 0 18 18"><path d="M4.500 6Q4 2.500 9 2.500T13.500 6Q13.500 8 11 9T9 12.500M9 14v3" fill="none" stroke="#008000" stroke-width="3" /></svg></button>
					</div>
				</form>
				<svg class="absolute right-[3px] bottom-[3px] size-[13px]" viewBox="0 0 13 13"><path d="M0 13L13 0M4 13l9-9M8 13l5-5" stroke="#505050" stroke-width="1.500" /><path d="M2 13L13 2M6 13l7-7M10 13l3-3" stroke="#fff" /></svg>
			</div>
		</div>
	</body>
</html>
